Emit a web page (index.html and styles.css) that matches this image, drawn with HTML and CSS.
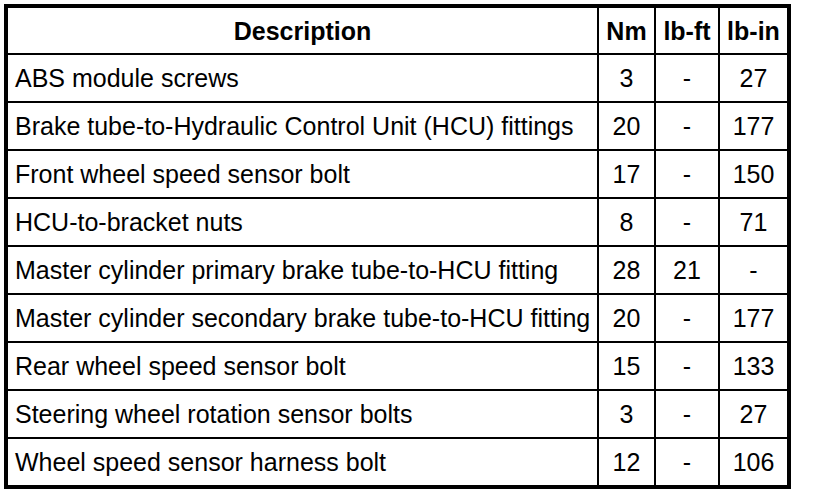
FILE: index.html
```html
<!DOCTYPE html>
<html>
<head>
<meta charset="utf-8">
<link rel="stylesheet" href="styles.css">
</head>
<body>
<table class="spec">
  <colgroup>
    <col class="c-desc"><col class="c-nm"><col class="c-ft"><col class="c-in">
  </colgroup>
  <thead>
    <tr><th>Description</th><th>Nm</th><th>lb-ft</th><th>lb-in</th></tr>
  </thead>
  <tbody>
    <tr><td>ABS module screws</td><td>3</td><td>-</td><td>27</td></tr>
    <tr><td>Brake tube-to-Hydraulic Control Unit (HCU) fittings</td><td>20</td><td>-</td><td>177</td></tr>
    <tr><td>Front wheel speed sensor bolt</td><td>17</td><td>-</td><td>150</td></tr>
    <tr><td>HCU-to-bracket nuts</td><td>8</td><td>-</td><td>71</td></tr>
    <tr><td>Master cylinder primary brake tube-to-HCU fitting</td><td>28</td><td>21</td><td>-</td></tr>
    <tr><td>Master cylinder secondary brake tube-to-HCU fitting</td><td>20</td><td>-</td><td>177</td></tr>
    <tr><td>Rear wheel speed sensor bolt</td><td>15</td><td>-</td><td>133</td></tr>
    <tr><td>Steering wheel rotation sensor bolts</td><td>3</td><td>-</td><td>27</td></tr>
    <tr><td>Wheel speed sensor harness bolt</td><td>12</td><td>-</td><td>106</td></tr>
  </tbody>
</table>
</body>
</html>
```
FILE: styles.css
```css
html, body {
  margin: 0;
  padding: 0;
  background: #fff;
}
body {
  padding: 4px;
  font-family: "Liberation Sans", Arial, sans-serif;
  color: #000;
}
.spec {
  border-collapse: separate;
  border-spacing: 0;
  border: 4px solid #000;
  table-layout: fixed;
  width: 787px;
  font-size: 25px;
}
.c-desc { width: 591px; }
.c-nm { width: 57px; }
.c-ft { width: 64px; }
.c-in { width: 67px; }
.spec th, .spec td {
  border-right: 2px solid #000;
  border-bottom: 2px solid #000;
  padding: 0;
  text-align: center;
  vertical-align: middle;
  white-space: nowrap;
  overflow: hidden;
  line-height: 28px;
}
.spec th:last-child, .spec td:last-child {
  border-right: none;
}
.spec tbody tr:last-child td {
  border-bottom: none;
}
.spec th {
  height: 45px;
  font-weight: bold;
}
.spec td {
  height: 46px;
}
.spec td:first-child {
  text-align: left;
  padding-left: 7px;
}
```
